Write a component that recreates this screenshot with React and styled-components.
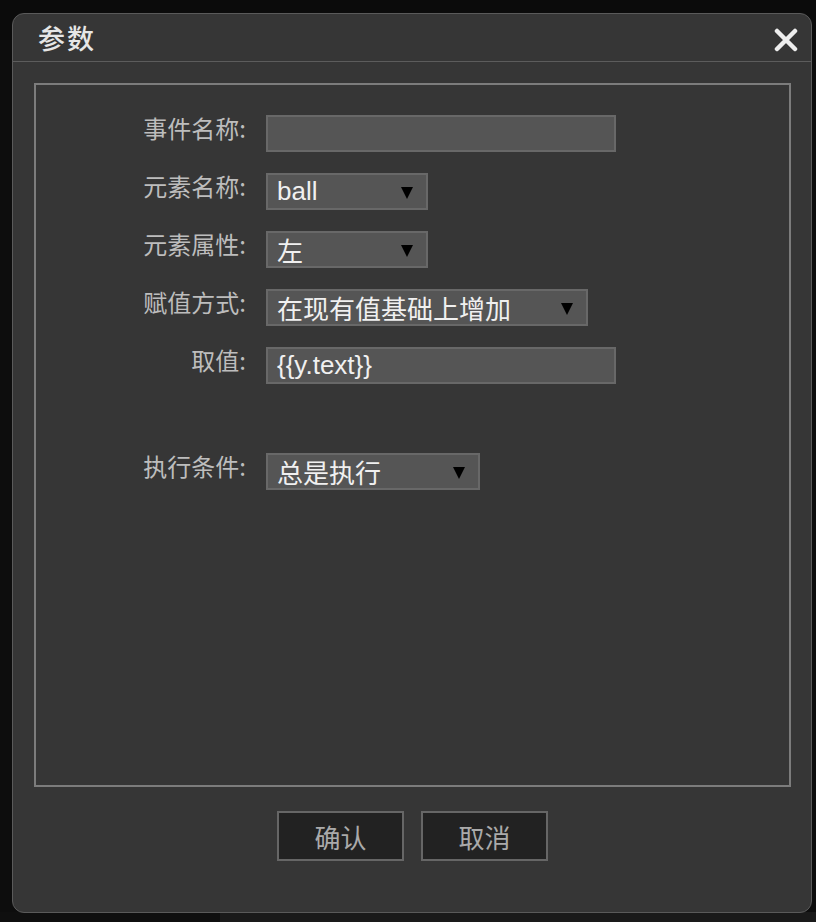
import React from 'react';
import styled, { createGlobalStyle } from 'styled-components';

const GlobalStyle = createGlobalStyle`
  html, body {
    margin: 0;
    padding: 0;
    background: #0b0b0b;
  }
  body {
    font-family: "Liberation Sans", "Noto Sans CJK SC", sans-serif;
  }
`;

const Page = styled.div`
  width: 816px;
  height: 922px;
  overflow: hidden;
  padding: 13px 0 0 12px;
  box-sizing: border-box;
  background:
    linear-gradient(#0b0b0b, #0b0b0b) 0 0 / 816px 40px no-repeat,
    linear-gradient(to right, #0f0f0f 220px, #1a1a1a 220px) 0 912px / 816px 10px no-repeat,
    #0d0d0d;
`;

const Dialog = styled.div`
  width: 800px;
  height: 900px;
  box-sizing: border-box;
  background: #363636;
  border: 1px solid #5a5a5a;
  border-radius: 12px;
  display: flex;
  flex-direction: column;
`;

const Header = styled.div`
  height: 47px;
  flex-shrink: 0;
  display: flex;
  align-items: center;
  justify-content: space-between;
  padding: 0 13px 0 25px;
  border-bottom: 1px solid #5c5c5c;
`;

const Title = styled.div`
  font-family: "Noto Sans CJK SC", sans-serif;
  font-size: 27px;
  font-weight: 500;
  color: #e6e6e6;
  letter-spacing: 2px;
`;

const Close = styled.button`
  width: 24px;
  height: 24px;
  padding: 0;
  border: none;
  background: none;
  cursor: pointer;
  display: flex;
  margin-top: 4px;
`;

const Body = styled.div`
  flex: 1;
  display: flex;
  flex-direction: column;
  padding: 21px 20px 0 21px;
`;

const Panel = styled.div`
  height: 704px;
  box-sizing: border-box;
  border: 2px solid #7c7c7c;
  padding: 30px 0 0 0;
  display: flex;
  flex-direction: column;
  gap: 21px;
`;

const Row = styled.div`
  display: flex;
  align-items: flex-start;
  gap: 20px;
  margin-top: ${({ $spaced }) => ($spaced ? '48px' : '0')};
`;

const Label = styled.div`
  width: 210px;
  text-align: right;
  font-family: "Noto Sans CJK SC", sans-serif;
  font-size: 24px;
  line-height: 26px;
  color: #bdbdbd;
  flex-shrink: 0;
`;

const Field = styled.div`
  width: ${({ $w }) => $w}px;
  height: 37px;
  box-sizing: border-box;
  background: #555555;
  border: 2px solid #686868;
  display: flex;
  align-items: center;
  justify-content: space-between;
  padding: 0 13px 0 9px;
  font-family: "Liberation Sans", "Noto Sans CJK SC", sans-serif;
  font-size: 26px;
  color: #f0f0f0;
  white-space: nowrap;
`;

const Arrow = styled.span`
  width: 0;
  height: 0;
  border-left: 6px solid transparent;
  border-right: 6px solid transparent;
  border-top: 12px solid #000;
  margin-top: 2px;
`;

const Footer = styled.div`
  display: flex;
  justify-content: center;
  gap: 17px;
  padding-top: 24px;
`;

const Button = styled.button`
  width: 127px;
  height: 50px;
  box-sizing: border-box;
  background: #222222;
  border: 2px solid #666666;
  color: #aaaaaa;
  font-family: "Noto Sans CJK SC", sans-serif;
  font-size: 26px;
  padding: 0;
  cursor: pointer;
`;

const Select = ({ w, value }) => (
  <Field $w={w}>
    <span>{value}</span>
    <Arrow />
  </Field>
);

export default function App() {
  return (
    <>
      <GlobalStyle />
      <Page>
        <Dialog>
          <Header>
            <Title>参数</Title>
            <Close aria-label="close">
              <svg width="24" height="24" viewBox="0 0 24 24">
                <path d="M3 3 L21 21 M21 3 L3 21" stroke="#eeeeee" strokeWidth="4.5" strokeLinecap="round" />
              </svg>
            </Close>
          </Header>
          <Body>
            <Panel>
              <Row>
                <Label>事件名称:</Label>
                <Field $w={350} />
              </Row>
              <Row>
                <Label>元素名称:</Label>
                <Select w={162} value="ball" />
              </Row>
              <Row>
                <Label>元素属性:</Label>
                <Select w={162} value="左" />
              </Row>
              <Row>
                <Label>赋值方式:</Label>
                <Select w={322} value="在现有值基础上增加" />
              </Row>
              <Row>
                <Label>取值:</Label>
                <Field $w={350}>{'{{y.text}}'}</Field>
              </Row>
              <Row $spaced>
                <Label>执行条件:</Label>
                <Select w={214} value="总是执行" />
              </Row>
            </Panel>
            <Footer>
              <Button>确认</Button>
              <Button>取消</Button>
            </Footer>
          </Body>
        </Dialog>
      </Page>
    </>
  );
}
